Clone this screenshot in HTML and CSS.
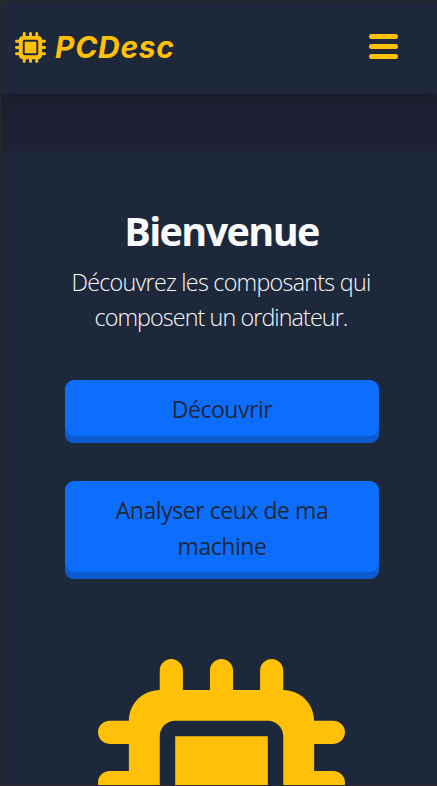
FILE: index.html
```html
<!DOCTYPE html>
<html lang="fr">
<head>
<meta charset="utf-8">
<title>PCDesc</title>
<link rel="stylesheet" href="styles.css">
</head>
<body>
<svg class="defs" aria-hidden="true"><symbol id="chip" viewBox="0 0 512 512"><path d="M176 24c0-13.3-10.7-24-24-24s-24 10.7-24 24V64c-35.3 0-64 28.7-64 64H24c-13.3 0-24 10.7-24 24s10.7 24 24 24H64v56H24c-13.3 0-24 10.7-24 24s10.7 24 24 24H64v56H24c-13.3 0-24 10.7-24 24s10.7 24 24 24H64c0 35.3 28.7 64 64 64v40c0 13.3 10.7 24 24 24s24-10.7 24-24V448h56v40c0 13.3 10.7 24 24 24s24-10.7 24-24V448h56v40c0 13.3 10.7 24 24 24s24-10.7 24-24V448c35.3 0 64-28.7 64-64h40c13.3 0 24-10.7 24-24s-10.7-24-24-24H448V280h40c13.3 0 24-10.7 24-24s-10.7-24-24-24H448V176h40c13.3 0 24-10.7 24-24s-10.7-24-24-24H448c0-35.3-28.7-64-64-64V24c0-13.3-10.7-24-24-24s-24 10.7-24 24V64H280V24c0-13.3-10.7-24-24-24s-24 10.7-24 24V64H176V24zM160 128H352c17.7 0 32 14.3 32 32V352c0 17.7-14.3 32-32 32H160c-17.7 0-32-14.3-32-32V160c0-17.7 14.3-32 32-32zm192 32H160V352H352V160z"/></symbol></svg>
<div class="page">
  <header class="navbar">
    <a class="brand"><svg class="brand-icon"><use href="#chip"/></svg><span class="brand-name">PCDesc</span></a>
    <button class="menu" aria-label="Menu"><span></span><span></span><span></span></button>
  </header>
  <main class="hero">
    <h1>Bienvenue</h1>
    <p class="lead">Découvrez les composants qui<br><span class="second">composent un ordinateur.</span></p>
    <a class="btn">Découvrir</a>
    <a class="btn btn-tall">Analyser ceux de ma<br>machine</a>
    <svg class="hero-chip"><use href="#chip"/></svg>
  </main>
</div>
</body>
</html>
```
FILE: styles.css
```css
* { box-sizing: border-box; }
html, body { margin: 0; height: 100%; overflow: hidden; }
body { background: #1d2133; font-family: "Open Sans", "Noto Sans", sans-serif; }
.defs { display: block; width: 0; height: 0; }
.page { height: 786px; overflow: hidden; border: solid #29292b; border-width: 1px 0 1px 1px; }
.navbar {
  position: relative;
  display: flex; justify-content: space-between; align-items: center;
  height: 93px; padding: 0 39px 0 14px;
  background: #1e283b;
  box-shadow: 0 8px 16px rgba(0, 0, 0, .18);
}
.brand { display: flex; align-items: center; gap: 9px; color: #ffc107; }
.brand-icon { width: 31px; height: 31px; fill: #ffc107; }
.brand-name { margin-top: -2px; font: italic 700 30px/40px Inter, sans-serif; letter-spacing: .7px; }
.menu { display: flex; flex-direction: column; gap: 5px; padding: 0; margin-top: -3px; border: 0; background: none; }
.menu span { width: 29px; height: 5px; border-radius: 3px; background: #ffc107; }
.hero {
  display: flex; flex-direction: column; align-items: center;
  margin-top: 57px; height: 636px; padding: 56px 52px 0 58px;
  background: #1e283b; overflow: hidden; text-align: center;
}
h1 { margin: 0 1px 0 0; font-size: 39.5px; line-height: 48px; font-weight: 700; letter-spacing: -1.6px; color: #f8fafc; }
.lead { margin: 10px 2px 0 0; font-size: 23.3px; line-height: 35px; font-weight: 340; letter-spacing: -.73px; color: #f8fafc; white-space: nowrap; }
.second { letter-spacing: -.9px; }
.btn {
  flex: none;
  width: 314px; height: 63px; margin-top: 45px; padding-top: 11px;
  border-radius: 9px; background: #0d6efd; box-shadow: inset 0 -7px #0b5ad0;
  color: #1e283b; font-size: 23px; line-height: 36px; letter-spacing: -.45px;
}
.btn-tall { height: 98px; margin-top: 38px; }
.hero-chip { flex: none; width: 247px; height: 247px; margin: 80px 1px 0 0; fill: #ffc107; }
```
